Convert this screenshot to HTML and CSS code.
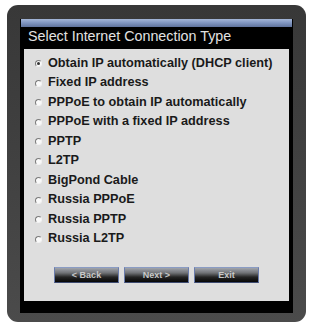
FILE: index.html
```html
<!DOCTYPE html>
<html>
<head>
<meta charset="utf-8">
<link rel="stylesheet" href="styles.css">
</head>
<body>
<div class="frame">
  <div class="panel">
    <div class="bluebar"></div>
    <div class="title">Select Internet Connection Type</div>
    <div class="content">
      <ul class="options">
        <li class="opt"><span class="radio checked"></span>Obtain IP automatically (DHCP client)</li>
        <li class="opt"><span class="radio"></span>Fixed IP address</li>
        <li class="opt"><span class="radio"></span>PPPoE to obtain IP automatically</li>
        <li class="opt"><span class="radio"></span>PPPoE with a fixed IP address</li>
        <li class="opt"><span class="radio"></span>PPTP</li>
        <li class="opt"><span class="radio"></span>L2TP</li>
        <li class="opt"><span class="radio"></span>BigPond Cable</li>
        <li class="opt"><span class="radio"></span>Russia PPPoE</li>
        <li class="opt"><span class="radio"></span>Russia PPTP</li>
        <li class="opt"><span class="radio"></span>Russia L2TP</li>
      </ul>
      <div class="buttons">
        <button class="btn">&lt; Back</button>
        <button class="btn">Next &gt;</button>
        <button class="btn">Exit</button>
      </div>
    </div>
  </div>
</div>
</body>
</html>
```

FILE: styles.css
```css
html, body {
  margin: 0;
  padding: 0;
  background: #ffffff;
}
body {
  font-family: "Liberation Sans", Arial, sans-serif;
}
.frame {
  box-sizing: border-box;
  margin: 5px 0 0 7px;
  width: 299px;
  height: 317px;
  border-radius: 11px;
  background: linear-gradient(180deg, #383838 0%, #414141 50%, #4b4b4b 100%);
  padding: 14px 13px 9px 13px;
}
.panel {
  width: 273px;
  height: 294px;
  background: #000;
  display: flex;
  flex-direction: column;
}
.bluebar {
  height: 8px;
  margin: 0 1px;
  background: linear-gradient(180deg, #a4b6d8 0%, #7f94bf 50%, #5f729c 100%);
}
.title {
  box-sizing: border-box;
  height: 22px;
  padding: 2px 0 0 8px;
  font-size: 14.3px;
  line-height: 15px;
  color: #e2e2e2;
  white-space: nowrap;
}
.content {
  margin: 0 4px;
  height: 252px;
  background: #dedede;
  display: flex;
  flex-direction: column;
}
.options {
  list-style: none;
  margin: 0;
  padding: 4px 0 0 11px;
}
.opt {
  height: 19.5px;
  display: flex;
  align-items: center;
  gap: 6px;
  font-size: 12.7px;
  font-weight: bold;
  color: #1a1a1a;
  white-space: nowrap;
}
.radio {
  width: 7px;
  height: 7px;
  box-sizing: border-box;
  border-radius: 50%;
  border: 1px solid #f2f2f2;
  border-top-color: #7a7a7a;
  border-left-color: #7a7a7a;
  background: #fafafa;
  position: relative;
  flex: none;
  margin-top: 2px;
}
.radio.checked::after {
  content: "";
  position: absolute;
  left: 1px;
  top: 1px;
  width: 3px;
  height: 3px;
  border-radius: 50%;
  background: #333;
}
.buttons {
  display: flex;
  gap: 5px;
  padding: 19px 0 0 30px;
}
.btn {
  box-sizing: border-box;
  width: 65px;
  height: 16px;
  margin: 0;
  padding: 0;
  border: 1px solid #3c4a70;
  border-top-color: #8a9cc4;
  border-left-color: #6a7cac;
  border-right-color: #6a7cac;
  background: linear-gradient(180deg, #a0a4ac 0%, #707276 35%, #242424 65%, #060606 100%);
  color: #c8c8c8;
  font-family: "Liberation Sans", Arial, sans-serif;
  font-size: 9px;
  font-weight: bold;
  line-height: 14px;
  text-align: center;
}
```
